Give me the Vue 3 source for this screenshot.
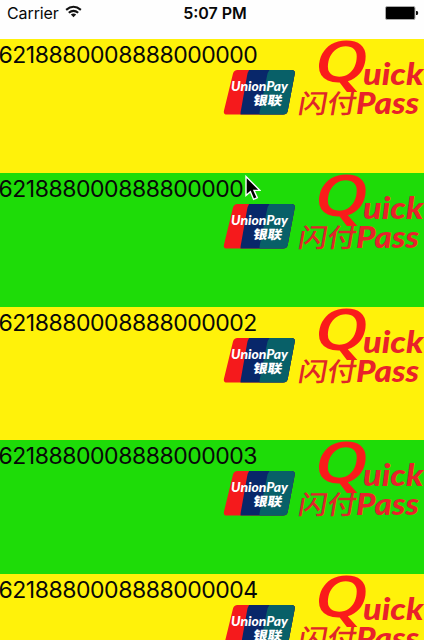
<script setup>
const cards = [
  '6218880008888000000',
  '621888000888800000',
  '6218880008888000002',
  '6218880008888000003',
  '6218880008888000004',
]
</script>

<template>
  <div class="screen">
    <header class="status">
      <div class="carrier">
        <span>Carrier</span>
        <svg class="wifi" viewBox="0 0 18 13" width="17" height="13">
          <g fill="none" stroke="#111" stroke-width="2.2">
            <path d="M1.2 4.8Q9 -1.8 16.8 4.8" />
            <path d="M4 7.9Q9 3.7 14 7.9" />
          </g>
          <path d="M6.2 9.7Q9 7.5 11.8 9.7L9 12.5Z" fill="#111" />
        </svg>
      </div>
      <div class="time">5:07 PM</div>
      <svg class="battery" viewBox="0 0 34 14" width="34" height="14">
        <rect x="0.5" y="0.5" width="29.5" height="13" rx="1.5" fill="#000" stroke="#aaa" />
        <path d="M31 5h1.2q1 .3 1 2t-1 2H31z" fill="#111" />
      </svg>
    </header>
    <main>
      <section v-for="(n, i) in cards" :key="n" class="card" :class="{ green: i % 2 }">
        <span class="number">{{ n }}</span>
        <svg class="logo" viewBox="220 39 204 84" width="204" height="84">
          <defs>
            <clipPath :id="'plate' + i">
              <path d="M237.5 70H291.5Q295.5 70 294.7 74L287.7 111Q287 114.5 283 114.5H227Q223 114.5 224 110.5L233 73.5Q234 70 237.5 70Z" />
            </clipPath>
          </defs>
          <g :clip-path="`url(#plate${i})`">
            <rect x="220" y="68" width="80" height="50" fill="#f51a1c" />
            <path d="M251 68H300V118H241Q240 114 241 110L247 76Q248 70 251 68Z" fill="#08276a" />
            <path d="M272 68H300V118H260Q259 114 260 110L267 76Q268 70 272 68Z" fill="#086068" />
          </g>
          <text class="brand" x="231" y="91" font-size="13" textLength="57" lengthAdjust="spacingAndGlyphs">UnionPay</text>
          <text class="brand-cn" transform="translate(252.5 104.5) skewX(-10)" font-size="12.5" textLength="29" lengthAdjust="spacingAndGlyphs">银联</text>
          <text class="quick" x="314" y="81.5" font-size="57" textLength="54" lengthAdjust="spacingAndGlyphs">Q</text>
          <text class="word" x="363" y="84.5" font-size="30.5" textLength="60.5" lengthAdjust="spacingAndGlyphs">uick</text>
          <text class="flash" transform="translate(297 112.5) skewX(-10)" font-size="26" textLength="58" lengthAdjust="spacingAndGlyphs">闪付</text>
          <text class="word" x="356" y="113.7" font-size="29.5" textLength="63" lengthAdjust="spacingAndGlyphs">Pass</text>
        </svg>
        <svg v-if="i === 1" class="cursor" viewBox="0 0 16 26" width="16" height="26">
          <path d="M1 1.5V20.5L5.4 16.7L8.6 24.4L12.3 22.7L9 15.4H15Z" fill="#000" stroke="#fff" stroke-width="1.4" />
        </svg>
      </section>
    </main>
  </div>
</template>

<style>
body { background: #fff; }
</style>

<style scoped>
.screen {
  width: 424px;
  height: 640px;
  overflow: hidden;
  background: #fefefe;
  font-family: Inter, "Liberation Sans", sans-serif;
  color: #080808;
}
.status {
  height: 39px;
  box-sizing: border-box;
  padding: 0 5px 13px 7px;
  display: grid;
  grid-template-columns: 1fr auto 1fr;
  align-items: center;
  font-size: 16px;
}
.carrier { display: flex; align-items: center; gap: 6px; letter-spacing: -0.1px; }
.wifi { margin-top: -3px; }
.time { font-weight: 600; padding-left: 4px; }
.battery { justify-self: end; margin-top: -1px; }
.card {
  position: relative;
  height: 133.75px;
  display: flex;
  justify-content: space-between;
  align-items: flex-start;
  background: #fff20a;
}
.card.green { background: #1edc08; }
.number {
  width: 220px;
  margin-left: -1.5px;
  font-size: 23px;
  line-height: 32px;
  white-space: nowrap;
  letter-spacing: -0.47px;
}
.logo { flex: none; overflow: hidden; }
.brand { font-family: Lato, sans-serif; font-weight: 900; font-style: italic; fill: #fff; }
.brand-cn { font-family: "Noto Sans CJK SC", sans-serif; font-weight: 900; fill: #fff; }
.quick { font-family: "Open Sans", sans-serif; font-weight: 600; font-style: italic; fill: #fa1b1b; }
.word { font-family: Lato, sans-serif; font-weight: 900; font-style: italic; fill: #e9222a; }
.flash { font-family: "Noto Sans CJK SC", sans-serif; font-weight: 500; fill: #df2629; }
.cursor { position: absolute; left: 245px; top: 2px; }
</style>
